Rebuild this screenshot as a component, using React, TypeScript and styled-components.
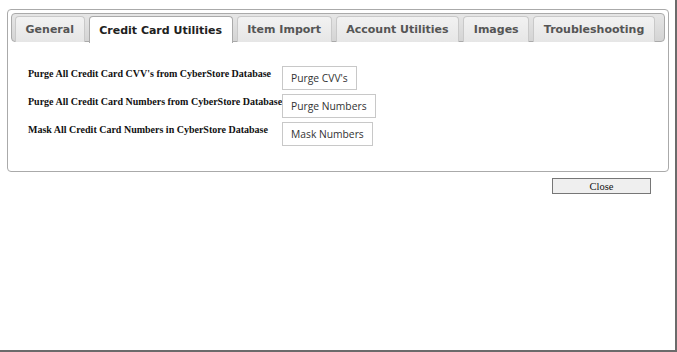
import { Fragment } from "react"
import styled, { createGlobalStyle } from "styled-components"

const GlobalStyle = createGlobalStyle`
    html, body {
        margin: 0;
        padding: 0;
        background: #fff;
    }
`

const Window = styled('div')`
    width: 677px;
    height: 352px;
    box-sizing: border-box;
    border-right: 2px solid #6b6b6b;
    border-bottom: 2px solid #6b6b6b;
    padding: 9px 6px 0 7px;
    display: flex;
    flex-direction: column;
    align-items: stretch;
`

const TabsPanel = styled('div')`
    border: 1px solid #aaa;
    border-radius: 4px;
    padding: 3px;
    height: 163px;
    box-sizing: border-box;
    background: #fff;
`

const TabNav = styled('ul')`
    list-style: none;
    margin: 0;
    padding: 2px 3px 0 3px;
    height: 29px;
    box-sizing: border-box;
    display: flex;
    gap: 4px;
    border: 1px solid #aaa;
    border-radius: 4px;
    background: linear-gradient(#e6e6e6, #d4d4d4);
`

const Tab = styled('li')<{ $active?: boolean }>`
    flex: none;
    white-space: nowrap;
    height: ${p => p.$active ? '27px' : '26px'};
    box-sizing: border-box;
    padding: 0 9.6px;
    display: flex;
    align-items: center;
    border: 1px solid ${p => p.$active ? '#aaa' : '#c9c9c9'};
    border-bottom: none;
    border-radius: 4px 4px 0 0;
    background: ${p => p.$active ? '#fff' : 'linear-gradient(#f2f2f2, #e6e6e6)'};
    color: ${p => p.$active ? '#212121' : '#555'};
    font-family: "DejaVu Sans", Verdana, sans-serif;
    font-weight: bold;
    font-size: 11px;
    z-index: 1;
`

const Content = styled('div')`
    padding: 24px 0 0 17px;
    display: flex;
    flex-direction: column;
    gap: 4px;
`

const Row = styled('div')`
    display: flex;
    align-items: flex-start;
`

const Label = styled('span')`
    width: 254px;
    flex: none;
    white-space: nowrap;
    padding-top: 2px;
    font-family: "Liberation Serif", "Times New Roman", serif;
    font-weight: bold;
    font-size: 10px;
    color: #111;
`

const ActionButton = styled('button')`
    height: 24px;
    box-sizing: border-box;
    padding: 0 8px;
    border: 1px solid #c8c8c8;
    background: #fff;
    font-family: "Open Sans", "Noto Sans", sans-serif;
    font-size: 10.3px;
    color: #333;
    cursor: pointer;
`

const Footer = styled('div')`
    display: flex;
    justify-content: flex-end;
    padding: 6px 18px 0 0;
`

const CloseButton = styled('button')`
    width: 99px;
    height: 16px;
    padding: 0;
    box-sizing: border-box;
    border: 1px solid #767676;
    border-radius: 0;
    background: #efefef;
    font-family: "Liberation Serif", "Times New Roman", serif;
    font-size: 10.5px;
    color: #111;
`

const tabs: string[] = [
    "General",
    "Credit Card Utilities",
    "Item Import",
    "Account Utilities",
    "Images",
    "Troubleshooting",
]

const actions = [
    { label: "Purge All Credit Card CVV's from CyberStore Database", button: "Purge CVV's" },
    { label: "Purge All Credit Card Numbers from CyberStore Database", button: "Purge Numbers" },
    { label: "Mask All Credit Card Numbers in CyberStore Database", button: "Mask Numbers" },
]

const App = (): JSX.Element => {
    return (
        <Fragment>
            <GlobalStyle />
            <Window>
                <TabsPanel>
                    <TabNav>
                        {tabs.map((t, i) => <Tab key={i} $active={i === 1}>{t}</Tab>)}
                    </TabNav>
                    <Content>
                        {actions.map((a, i) => (
                            <Row key={i}>
                                <Label>{a.label}</Label>
                                <ActionButton>{a.button}</ActionButton>
                            </Row>
                        ))}
                    </Content>
                </TabsPanel>
                <Footer>
                    <CloseButton>Close</CloseButton>
                </Footer>
            </Window>
        </Fragment>
    )
}

export default App
